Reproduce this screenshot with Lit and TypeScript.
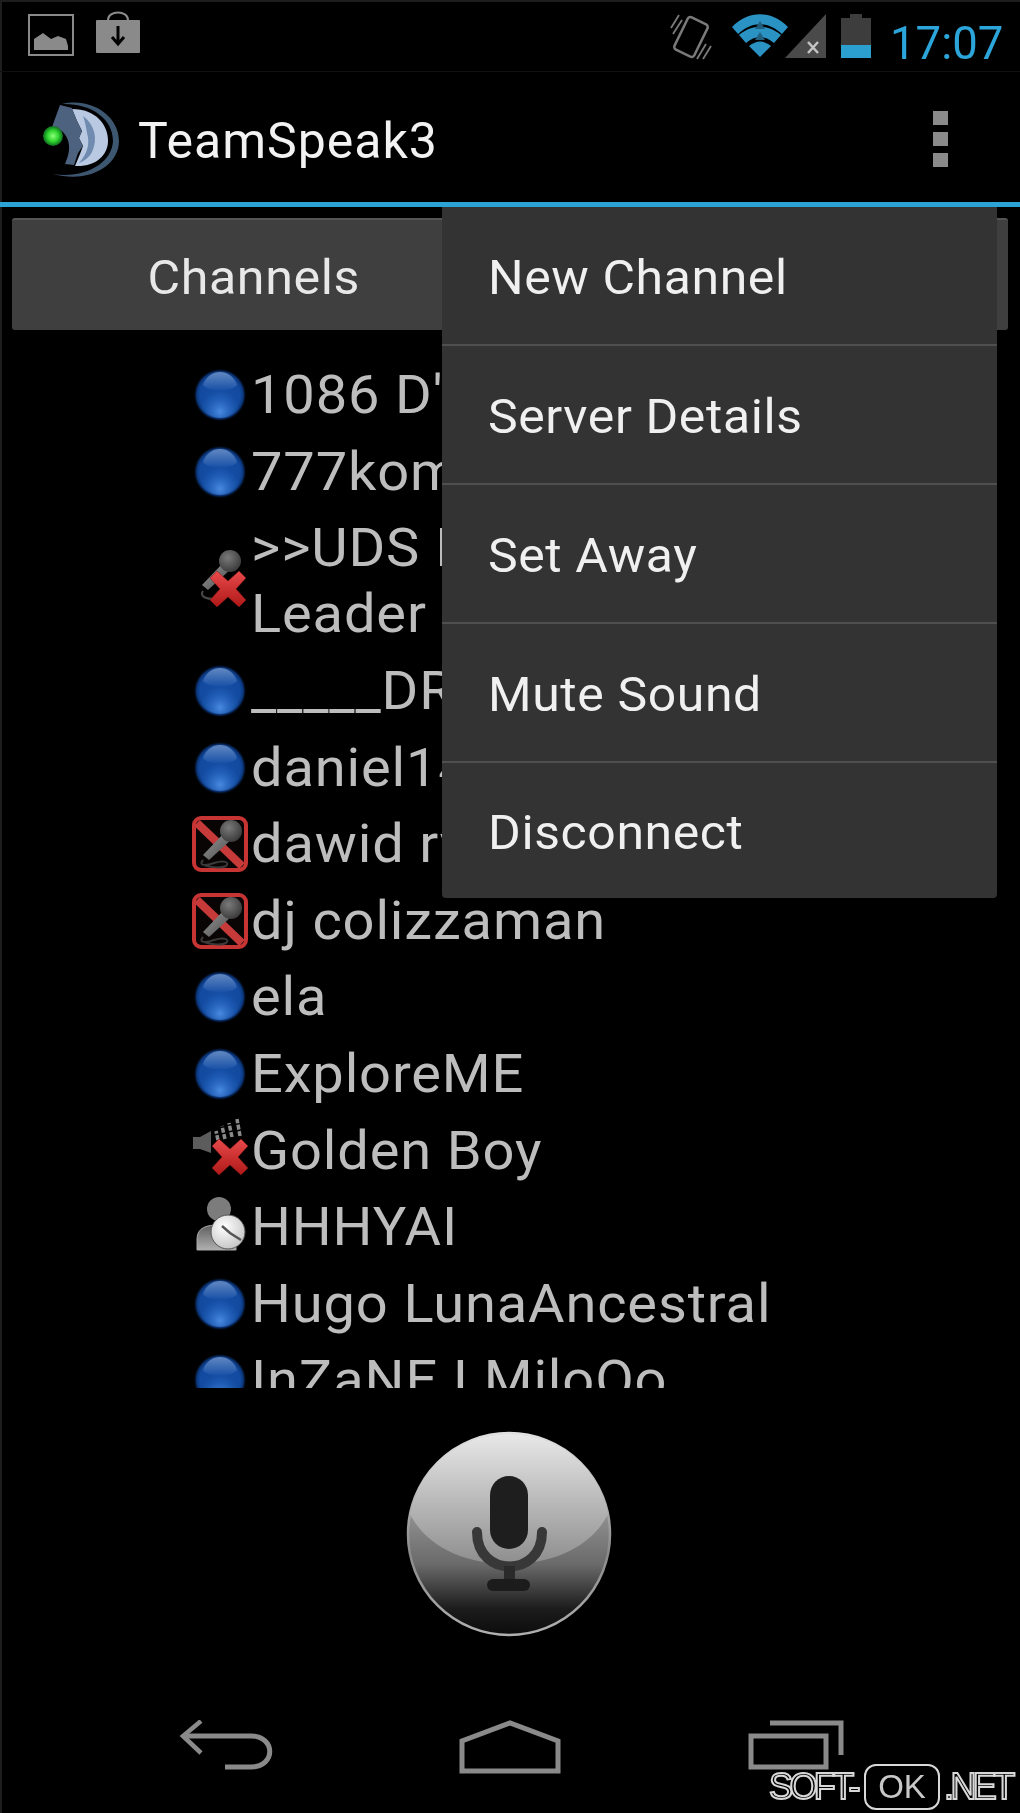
import { LitElement, html, css, svg } from "lit";
import { customElement } from "lit/decorators.js";

const defs = svg`
  <defs>
    <radialGradient id="orbBase" cx="50%" cy="50%" r="50%">
      <stop offset="0" stop-color="#164fa6"/><stop offset=".78" stop-color="#124a9f"/><stop offset=".9" stop-color="#0b3578"/><stop offset="1" stop-color="#04112a" stop-opacity=".2"/>
    </radialGradient>
    <radialGradient id="orbLow" cx="50%" cy="86%" r="46%">
      <stop offset="0" stop-color="#4a8ae0"/><stop offset="1" stop-color="#2468c8" stop-opacity="0"/>
    </radialGradient>
    <linearGradient id="orbTop" x1="0" y1="0" x2="0" y2="1">
      <stop offset="0" stop-color="#6f93c8"/><stop offset="1" stop-color="#1a52a8"/>
    </linearGradient>
    <linearGradient id="xRed" x1="0" y1="0" x2="0" y2="1">
      <stop offset="0" stop-color="#e84a4a"/><stop offset="1" stop-color="#b01818"/>
    </linearGradient>
    <linearGradient id="micHandle" x1="0" y1="0" x2="1" y2="1">
      <stop offset="0" stop-color="#9a9a9a"/><stop offset="1" stop-color="#4a4a4a"/>
    </linearGradient>
    <radialGradient id="micHead" cx="40%" cy="35%" r="70%">
      <stop offset="0" stop-color="#7a7a7a"/><stop offset="1" stop-color="#383838"/>
    </radialGradient>
    <radialGradient id="clockFace" cx="40%" cy="35%" r="70%">
      <stop offset="0" stop-color="#ffffff"/><stop offset="1" stop-color="#c4c4c4"/>
    </radialGradient>
    <linearGradient id="personBody" x1="0" y1="0" x2="0" y2="1">
      <stop offset="0" stop-color="#5e5e5e"/><stop offset="1" stop-color="#b0b0b0"/>
    </linearGradient>
    <radialGradient id="greenDot" cx="50%" cy="50%" r="50%">
      <stop offset="0" stop-color="#8cff7a"/><stop offset=".55" stop-color="#2fd62f"/><stop offset="1" stop-color="#0e6a1e"/>
    </radialGradient>
    <linearGradient id="btnTop" x1="0" y1="0" x2="0" y2="1">
      <stop offset="0" stop-color="#e8e8e8"/><stop offset="1" stop-color="#8e8e8e"/>
    </linearGradient>
    <linearGradient id="btnBottom" x1="0" y1="0" x2="0" y2="1">
      <stop offset=".3" stop-color="#a0a0a0"/><stop offset=".65" stop-color="#6a6a6a"/><stop offset=".87" stop-color="#1c1c1c"/><stop offset="1" stop-color="#0c0c0c"/>
    </linearGradient>
    <linearGradient id="btnRim" x1="0" y1="0" x2="0" y2="1">
      <stop offset="0" stop-color="#e0e0e0"/><stop offset=".6" stop-color="#8a8a8a"/><stop offset="1" stop-color="#b0b0b0"/>
    </linearGradient>
  </defs>`;

const xMark = (cx: number, cy: number, s: number) => svg`
  <path transform="translate(${cx} ${cy}) scale(${s})" fill="url(#xRed)" stroke="#7a1414" stroke-width=".5"
    d="M-11 -18 L0 -8 L11 -18 L18 -11 L8 0 L18 11 L11 18 L0 8 L-11 18 L-18 11 L-8 0 L-18 -11 Z"/>`;

const micShape = svg`
  <path d="M9 38 L31 15 L38 22 L15 43 Z" fill="url(#micHandle)"/>
  <circle cx="37" cy="14" r="11" fill="url(#micHead)"/>`;

const orb = svg`<svg class="ic" viewBox="0 0 56 56">
  <circle cx="28" cy="28" r="26" fill="url(#orbBase)"/>
  <circle cx="28" cy="28" r="23" fill="url(#orbLow)"/>
  <path d="M11 18 C14 9 21 5 28 5 C35 5 42 9 45 18 C41 25 15 25 11 18 Z" fill="url(#orbTop)" opacity=".85"/>
</svg>`;

const micOff = svg`<svg class="ic" viewBox="0 0 56 56">
  <g transform="translate(1 -2)">
    ${micShape}
    <path d="M10 44 C6 50 14 52 22 52" fill="none" stroke="#4a4a4a" stroke-width="2"/>
  </g>
  ${xMark(36, 40, 1)}
</svg>`;

const micBlocked = svg`<svg class="ic" viewBox="0 0 56 56">
  <rect x="2" y="2" width="52" height="52" rx="7" fill="#0a0505" stroke="#c63434" stroke-width="4"/>
  <path d="M5 7 L50 50" stroke="#c63a3a" stroke-width="8"/>
  <g transform="translate(2 1)">${micShape}</g>
  <path d="M11 44 C6 50 14 50 22 47 C32 44 38 46 34 50 C30 52 20 52 12 49" fill="none" stroke="#3a3a3a" stroke-width="2"/>
</svg>`;

const speakerOff = svg`<svg class="ic" viewBox="0 0 56 56">
  <path d="M1 14 H8 L19 8 V30 L8 26 H1 Z" fill="#5c5c5c"/>
  <path d="M26 17 L24 8 M33 16 L30 3 M40 14 L37 0 M48 13 L45 -4" stroke="#8a8a8a" stroke-width="3.5" stroke-dasharray="5 1.5" fill="none"/>
  ${xMark(38, 34, 1)}
</svg>`;

const away = svg`<svg class="ic" viewBox="0 0 56 56">
  <circle cx="27" cy="10" r="12" fill="#7c7c7c"/>
  <path d="M5 51 V40 C5 28 16 26 26 26 C36 26 42 32 44 44 V51 Z" fill="url(#personBody)" stroke="#a8a8a8" stroke-width="1"/>
  <circle cx="36" cy="33" r="17" fill="url(#clockFace)" stroke="#555" stroke-width="1"/>
  <path d="M30 27 L38 34 L49 41" stroke="#555" stroke-width="2.5" fill="none"/>
</svg>`;

type Row = { icon: unknown; lines: string[] };
const rows: Row[] = [
  { icon: orb, lines: ["1086 D'"] },
  { icon: orb, lines: ["777kom"] },
  { icon: micOff, lines: [">>UDS I", "Leader"] },
  { icon: orb, lines: ["_____DR"] },
  { icon: orb, lines: ["daniel14"] },
  { icon: micBlocked, lines: ["dawid ry"] },
  { icon: micBlocked, lines: ["dj colizzaman"] },
  { icon: orb, lines: ["ela"] },
  { icon: orb, lines: ["ExploreME"] },
  { icon: speakerOff, lines: ["Golden Boy"] },
  { icon: away, lines: ["HHHYAI"] },
  { icon: orb, lines: ["Hugo LunaAncestral"] },
  { icon: orb, lines: ["InZaNE I MiloOo"] },
];

const menu = ["New Channel", "Server Details", "Set Away", "Mute Sound", "Disconnect"];

@customElement("app-root")
export class AppRoot extends LitElement {
  static styles = css`
    :host { display: block; width: 1020px; height: 1813px; }
    * { box-sizing: border-box; }
    .screen { position: relative; width: 1020px; height: 1813px; overflow: hidden; background: #000;
      box-shadow: inset 2px 2px 0 #1e1e1e; font-family: Roboto, "Liberation Sans", sans-serif; filter: blur(.5px); }
    .defs { position: absolute; width: 0; height: 0; }
    .status { height: 72px; border-bottom: 1px solid #101010; display: flex; align-items: flex-start; padding: 10px 20px 0 28px; }
    .status svg { display: block; flex: none; }
    .bag { margin-left: 22px; }
    .spacer { flex: 1; }
    .vib { margin-top: 2px; }
    .wifi { margin-left: 20px; margin-top: 4px; }
    .sig { margin-left: -3px; margin-top: 3px; }
    .bat { margin-left: 14px; margin-top: 3px; }
    .time { width: 110px; flex: none; white-space: nowrap; text-align: right; color: #2ca6da; font-size: 45.5px; line-height: 52px; margin-left: 19px; margin-top: 8px; font-weight: 400; }
    .bar { height: 130px; display: flex; align-items: center; padding: 0 72px 0 40px; }
    .logo { width: 80px; height: 80px; flex: none; margin-top: 2px; }
    .title { color: #f2f2f2; font-size: 50px; letter-spacing: 1px; margin-left: 18px; margin-top: 7px; flex: 1; }
    .dots { display: flex; flex-direction: column; gap: 7px; margin-top: 4px; }
    .dots i { display: block; width: 15px; height: 14px; background: #8a8a8a; }
    .line { height: 5px; background: #2ba3d5; }
    .tabs { margin: 11px 12px 0; height: 112px; background: #3f3f3f; border-top: 2px solid #555; border-radius: 3px; display: flex; align-items: center; }
    .tab { width: 484px; text-align: center; padding-top: 4px; }
    .tab span { display: inline-block; color: #e8e8e8; font-size: 48px; letter-spacing: .6px; transform: scaleX(1.045); }
    .list { margin-top: 27px; height: 1031px; overflow: hidden; padding-left: 192px; }
    .row { display: flex; align-items: center; padding: 5.3px 0; color: #bdbdbd; font-size: 53px; letter-spacing: .8px; line-height: 66px; }
    .ic { width: 56px; height: 56px; flex: none; display: block; overflow: visible; }
    .txt { margin-left: 3px; white-space: nowrap; transform-origin: left center; transform: scaleX(1.057); }
    .txt div { height: 66px; }
    .up { margin-top: -8px; }
    .mic { display: block; width: 208px; height: 208px; margin: 42px auto 0; transform: translateX(-1px); }
    .nav { display: grid; grid-template-columns: 284px 284px 288px; padding-left: 84px; margin-top: 82px; }
    .nav svg { display: block; justify-self: center; }
    .menu { position: absolute; left: 442px; top: 207px; width: 555px; height: 691px; background: #333; border-radius: 0 0 4px 4px; }
    .item { height: 139px; padding: 4px 0 0 46px; display: flex; align-items: center; border-bottom: 2px solid #4f4f4f; }
    .item span { display: inline-block; color: #f0f0f0; font-size: 48px; letter-spacing: .6px; transform-origin: left center; transform: scaleX(1.04); }
    .item:last-child { border-bottom: 0; height: 135px; }
    .mark { position: absolute; left: 769px; top: 1764px; height: 46px; display: flex; align-items: center; font-family: "Liberation Sans", sans-serif; font-size: 36px; color: #000; -webkit-text-stroke: 2px #d8d8d8; letter-spacing: -3.6px; }
    .ok { width: 76px; height: 46px; margin: 0 4px 0 7px; border: 2px solid #d8d8d8; border-radius: 12px; display: flex; align-items: center; justify-content: center; color: #c8c8c8; font-size: 33px; letter-spacing: 0; -webkit-text-stroke: 0; font-weight: 400; }
  `;

  render() {
    return html`<div class="screen">
      <svg class="defs">${defs}</svg>
      <div class="status">
        <svg width="46" height="46" viewBox="0 0 46 46">
          <rect x="1" y="5" width="44" height="40" fill="none" stroke="#8a8a8a" stroke-width="2"/>
          <path d="M6 40 V29 L15 23 L23 29 L30 26 L38 29 L40 36 V40 Z" fill="#8a8a8a"/>
        </svg>
        <svg class="bag" width="44" height="44" viewBox="0 0 44 44">
          <path d="M12 12 V9 C12 -1 32 -1 32 9 V12" transform="translate(0 1)" fill="none" stroke="#8a8a8a" stroke-width="2"/>
          <rect x="0" y="10" width="44" height="33" rx="1" fill="#8a8a8a"/>
          <path d="M22 16 V32 M16 27 L22 34 L28 27" fill="none" stroke="#000" stroke-width="3"/>
        </svg>
        <span class="spacer"></span>
        <svg class="vib" width="42" height="50" viewBox="0 0 42 50">
          <rect x="10" y="7" width="22" height="36" rx="3" transform="rotate(26 21 25)" fill="none" stroke="#7a7a7a" stroke-width="2.5"/>
          <path d="M1 16 L9 3 M3 22 L12 8 M27 47 L36 32 M33 47 L41 34" stroke="#7a7a7a" stroke-width="1.8" fill="none"/>
        </svg>
        <svg class="wifi" width="56" height="44" viewBox="0 0 56 44">
          <path d="M0 13 C16 -4 40 -4 56 13 L50 20 C36 7 20 7 6 20 Z" fill="#2a93c4"/>
          <path d="M7 21 C20 10 36 10 49 21 L42 29 C33 21 23 21 14 29 Z" fill="#2a93c4"/>
          <path d="M17 32 C25 26 31 26 39 32 L28 43 Z" fill="#2a93c4"/>
          <path d="M28 7 L33 15 H23 Z M28 18 L33 26 H23 Z" fill="#215f7e"/>
        </svg>
        <svg class="sig" width="42" height="46" viewBox="0 0 42 46">
          <path d="M41 1 V45 H0 Z" fill="#4a4a4a"/>
          <path d="M23 29 L33 40 M33 29 L23 40" stroke="#c4c4c4" stroke-width="2.5"/>
        </svg>
        <svg class="bat" width="30" height="46" viewBox="0 0 30 46">
          <path d="M0 5 H9 V1 H21 V5 H30 V45 H0 Z" fill="#3d3d3d"/>
          <rect x="0" y="32" width="30" height="13" fill="#2a9fd0"/>
        </svg>
        <span class="time">17:07</span>
      </div>

      <div class="bar">
        <svg class="logo" viewBox="40 95 80 80">
          <path d="M62 101 C90 94 119 112 119 138 C119 162 90 181 53 171 C85 176 112 160 113 138 C113 115 90 100 62 101 Z" fill="#3e5770"/>
          <path d="M72 106 C96 106 108 122 108 138 C108 152 96 164 75 163 L80 151 L83 143 L79 135 L82 128 L77 118 Z" fill="#b9c9e2"/>
          <path d="M83 113 C95 122 98 136 92 149 C89 155 84 158 79 160 C88 150 90 140 87 130 C86 124 85 118 83 113 Z" fill="#6f8bb0"/>
          <path d="M60 102 L72 105 L77 118 L82 128 L79 135 L83 143 L78 150 L74 162 L65 161 C70 150 72 138 62 128 L52 124 Z" fill="#4c627f"/>
          <circle cx="53" cy="133" r="10" fill="url(#greenDot)"/>
        </svg>
        <span class="title">TeamSpeak3</span>
        <span class="dots"><i></i><i></i><i></i></span>
      </div>
      <div class="line"></div>

      <div class="tabs"><div class="tab"><span>Channels</span></div></div>

      <div class="list">
        ${rows.map((r) => html`<div class="row">
          <span class=${r.lines.length > 1 ? "up" : ""}>${r.icon}</span>
          <div class="txt">${r.lines.map((l) => html`<div>${l}</div>`)}</div>
        </div>`)}
      </div>

      <svg class="mic" viewBox="0 0 208 208">
        <circle cx="104" cy="104" r="101" fill="url(#btnBottom)" stroke="url(#btnRim)" stroke-width="2.5"/>
        <path d="M5 84 C14 36 56 4 104 4 C152 4 194 36 203 84 C186 118 146 134 104 134 C62 134 22 118 5 84 Z" fill="url(#btnTop)"/>
        <rect x="85" y="46" width="38" height="73" rx="19" fill="#1e1e1e"/>
        <path d="M72 102 C72 148 137 148 137 102" fill="none" stroke="#383838" stroke-width="10" stroke-linecap="round"/>
        <rect x="99" y="136" width="11" height="18" fill="#2a2a2a"/>
        <rect x="82" y="149" width="43" height="12" rx="6" fill="#1c1c1c"/>
      </svg>

      <div class="nav">
        <svg width="94" height="50" viewBox="0 0 94 50">
          <path d="M22 1 L4 16 L22 33" fill="none" stroke="#8a8a8a" stroke-width="4.5"/>
          <path d="M4 16 H72 C97 16 97 47 72 47 H46" fill="none" stroke="#8a8a8a" stroke-width="5"/>
        </svg>
        <svg width="102" height="54" viewBox="0 0 102 54">
          <path d="M3 51 V21 L51 3 L99 21 V51 Z" fill="none" stroke="#8a8a8a" stroke-width="5"/>
        </svg>
        <svg width="96" height="50" viewBox="0 0 96 50">
          <rect x="3" y="16" width="75" height="31" fill="none" stroke="#8a8a8a" stroke-width="5"/>
          <path d="M22 3 H93 V35" fill="none" stroke="#8a8a8a" stroke-width="5"/>
        </svg>
      </div>

      <div class="menu">${menu.map((m) => html`<div class="item"><span>${m}</span></div>`)}</div>
      <div class="mark">SOFT-<span class="ok">OK</span>.NET</div>
    </div>`;
  }
}
